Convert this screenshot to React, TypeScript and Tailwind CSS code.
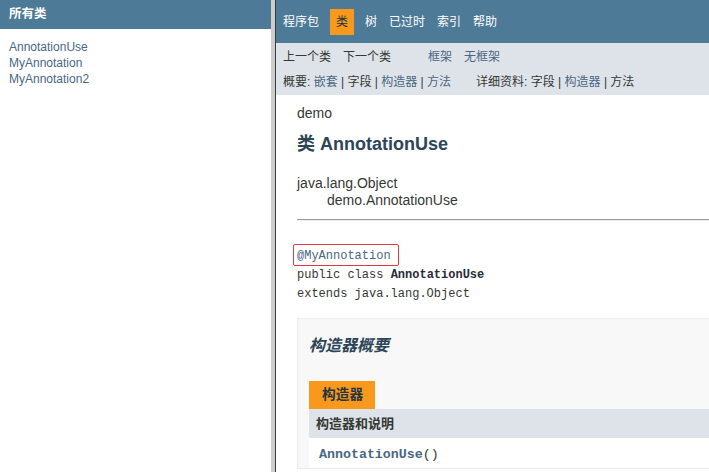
import React from 'react';

// Javadoc frames view: all-classes list on the left, class page on the right

const link = 'text-[#4a6782]';
const mono = "font-['Liberation_Mono',monospace]";

const classes = ['AnnotationUse', 'MyAnnotation', 'MyAnnotation2'];

function AllClassesFrame() {
  return (
    <div className="flex w-[271px] shrink-0 flex-col bg-white">
      <div className="flex h-[29px] items-center bg-[#4d7a97] px-[9px] text-[12.5px] font-bold text-white">所有类</div>
      <ul className={`px-[9px] pt-[10px] text-[12px] leading-[16px] ${link}`}>
        {classes.map(c => (
          <li key={c}>{c}</li>
        ))}
      </ul>
    </div>
  );
}

function TopNav() {
  return (
    <div className="flex h-[43px] shrink-0 items-center bg-[#4d7a97] pl-[7px] text-[12px] text-white">
      <span>程序包</span>
      <span className="ml-[11px] flex h-[26px] items-center bg-[#f8981d] px-[6px] text-[#253441]">类</span>
      <span className="ml-[11px]">树</span>
      <span className="ml-[12px]">已过时</span>
      <span className="ml-[12px]">索引</span>
      <span className="ml-[12px]">帮助</span>
    </div>
  );
}

function SubNav() {
  return (
    <div className="h-[52px] shrink-0 bg-[#dee3e9] pl-[7px] pt-[6px] text-[12px] leading-[16px] text-[#353833]">
      <div className="flex">
        <span>上一个类</span>
        <span className="ml-[12px]">下一个类</span>
        <span className={`ml-[37px] ${link}`}>框架</span>
        <span className={`ml-[12px] ${link}`}>无框架</span>
      </div>
      <div className="mt-[9px] flex whitespace-pre">
        <span>
          概要: <span className={link}>嵌套</span> | 字段 | <span className={link}>构造器</span> | <span className={link}>方法</span>
        </span>
        <span className="ml-[25px]">
          详细资料: 字段 | <span className={link}>构造器</span> | 方法
        </span>
      </div>
    </div>
  );
}

function ClassPage() {
  return (
    <div className="flex-1 overflow-hidden bg-white pl-[21px] text-[#353833]">
      <div className="pt-[9px] text-[14px] leading-[18px]">demo</div>
      <h2 className="mt-[11px] text-[18px] font-bold leading-[22px] text-[#2c4557]">类 AnnotationUse</h2>
      <div className="mt-[20px] text-[14px] leading-[17px]">
        <div>java.lang.Object</div>
        <div className="pl-[30px]">demo.AnnotationUse</div>
      </div>
      <div className="mr-[-12px] mt-[10px] h-[2px] border-t border-b border-t-[#9a9a9a] border-b-[#eeeeee]" />

      <pre className={`mt-[26px] text-[12px] leading-[19px] ${mono}`}>
        <span className="relative inline-block">
          <span className={link}>@MyAnnotation</span>
          <span className="absolute -left-[4px] -top-[3px] h-[22px] w-[106px] rounded-[2px] border border-[#e2383f]" />
        </span>
        {'\n'}public class <b className="text-[#2c2c3a]">AnnotationUse</b>
        {'\n'}extends java.lang.Object
      </pre>

      <div className="mr-[-12px] mt-[14px] border border-[#ededed] bg-[#f8f8f8] pl-[11px] pt-[17px]">
        <h3 className="text-[16px] font-bold italic leading-[20px] text-[#2c4557]">构造器概要</h3>
        <div className="mt-[25px] flex h-[28px] w-[66px] items-center bg-[#f8981d] pl-[13px] text-[13.7px] font-bold text-[#253441]">
          构造器
        </div>
        <div className="flex h-[29px] items-center bg-[#dee3e9] pl-[7px] text-[13px] font-bold text-[#353833]">构造器和说明</div>
        <div className={`flex h-[30px] items-center bg-white pl-[10px] pt-[3px] text-[13.3px] ${mono}`}>
          <b className={link}>AnnotationUse</b>
          <span>()</span>
        </div>
      </div>
    </div>
  );
}

export default function App() {
  return (
    <div className="flex h-[472px] w-[709px] overflow-hidden bg-white font-['Liberation_Sans','Noto_Sans_CJK_SC',sans-serif]">
      <AllClassesFrame />
      <div className="w-[4px] shrink-0 bg-[#cdcdcd]" />
      <div className="w-[1px] shrink-0 bg-[#3a3a3a]" />
      <div className="flex min-w-0 flex-1 flex-col">
        <TopNav />
        <SubNav />
        <ClassPage />
      </div>
    </div>
  );
}
